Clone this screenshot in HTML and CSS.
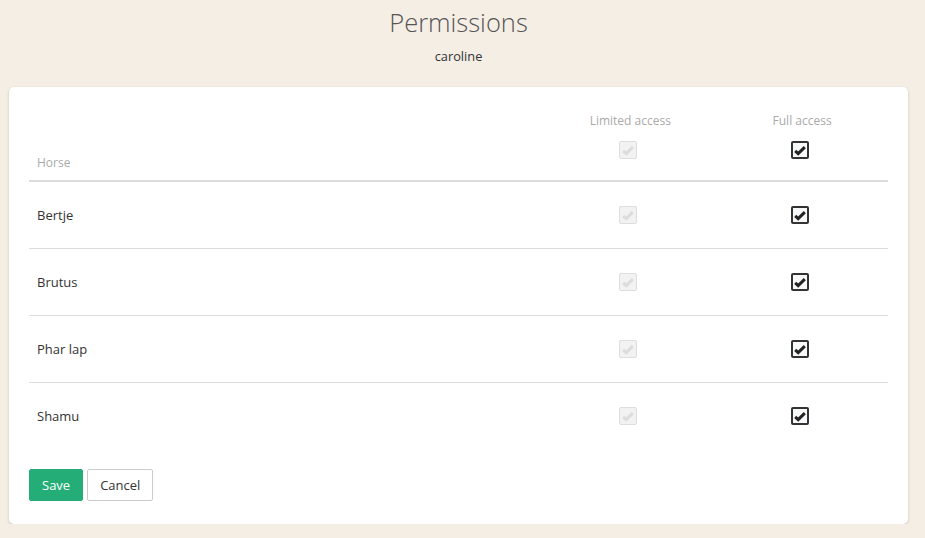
FILE: index.html
```html
<!DOCTYPE html>
<html lang="en">
<head>
    <meta charset="UTF-8">
    <meta name="viewport" content="width=device-width, initial-scale=1.0">
    <title>Permissions</title>
    <link rel="stylesheet" href="styles.css">
</head>
<body>

    <div class="head">
        <h1>Permissions</h1>
        <p class="user">caroline</p>
    </div>

    <div class="card">
        <table class="perms">
            <thead>
                <tr>
                    <th class="name">Horse</th>
                    <th class="col">Limited access<span class="box off"><svg viewBox="0 0 14 14"><polyline points="2.2,7.8 5.2,10.6 11.8,4.2"/></svg></span></th>
                    <th class="col">Full access<span class="box on"><svg viewBox="0 0 14 14"><polyline points="2.2,7.8 5.2,10.6 11.8,4.2"/></svg></span></th>
                </tr>
            </thead>
            <tbody>
                <tr>
                    <td>Bertje</td>
                    <td class="col"><span class="box off"><svg viewBox="0 0 14 14"><polyline points="2.2,7.8 5.2,10.6 11.8,4.2"/></svg></span></td>
                    <td class="col"><span class="box on"><svg viewBox="0 0 14 14"><polyline points="2.2,7.8 5.2,10.6 11.8,4.2"/></svg></span></td>
                </tr>
                <tr>
                    <td>Brutus</td>
                    <td class="col"><span class="box off"><svg viewBox="0 0 14 14"><polyline points="2.2,7.8 5.2,10.6 11.8,4.2"/></svg></span></td>
                    <td class="col"><span class="box on"><svg viewBox="0 0 14 14"><polyline points="2.2,7.8 5.2,10.6 11.8,4.2"/></svg></span></td>
                </tr>
                <tr>
                    <td>Phar lap</td>
                    <td class="col"><span class="box off"><svg viewBox="0 0 14 14"><polyline points="2.2,7.8 5.2,10.6 11.8,4.2"/></svg></span></td>
                    <td class="col"><span class="box on"><svg viewBox="0 0 14 14"><polyline points="2.2,7.8 5.2,10.6 11.8,4.2"/></svg></span></td>
                </tr>
                <tr>
                    <td>Shamu</td>
                    <td class="col"><span class="box off"><svg viewBox="0 0 14 14"><polyline points="2.2,7.8 5.2,10.6 11.8,4.2"/></svg></span></td>
                    <td class="col"><span class="box on"><svg viewBox="0 0 14 14"><polyline points="2.2,7.8 5.2,10.6 11.8,4.2"/></svg></span></td>
                </tr>
            </tbody>
        </table>

        <div class="actions">
            <button class="btn save">Save</button>
            <button class="btn cancel">Cancel</button>
        </div>
    </div>

</body>
</html>
```

FILE: styles.css
```css
* {
  margin: 0;
  padding: 0;
  box-sizing: border-box;
}

body {
  background-color: #f5eee5;
  font-family: "Open Sans", sans-serif;
  font-size: 13px;
  color: #333;
  padding: 0 17px 0 9px;
}

.head {
  text-align: center;
  padding-top: 5px;
}
.head h1 {
  font-weight: 300;
  font-size: 25.5px;
  line-height: 34px;
  color: #555;
}
.head .user {
  margin-top: 8px;
  font-size: 12.8px;
  line-height: 18px;
}

.card {
  margin-top: 22px;
  background-color: white;
  border-radius: 5px;
  box-shadow: 0 1px 3px rgba(0, 0, 0, 0.18);
  padding: 20px 20px 23px;
}

.perms {
  width: 100%;
  border-collapse: collapse;
}
.perms th {
  font-weight: normal;
  font-size: 12px;
  color: #aaa;
  line-height: 17px;
  vertical-align: bottom;
  padding: 5px 8px 9px;
  border-bottom: 2px solid #ddd;
}
.perms th.name {
  text-align: left;
  width: 60%;
}
.perms th.col {
  width: 20%;
}
.perms td {
  padding: 24px 8px;
  line-height: 18px;
  border-bottom: 1px solid #ddd;
}
.perms tr:last-child td {
  border-bottom: none;
}
.col {
  text-align: center;
}

.box {
  display: block;
  margin: 0 auto;
  width: 18px;
  height: 18px;
  border-radius: 2px;
  line-height: 0;
  position: relative;
  left: -2px;
}
th .box {
  margin-top: 12px;
  margin-bottom: 12px;
}
.box svg {
  width: 14px;
  height: 14px;
  fill: none;
  stroke-width: 3;
}
.box.on {
  border: 2px solid #333;
  background-color: #f7f8fa;
}
.box.on svg {
  stroke: #222;
}
.box.off {
  border: 1px solid #dedede;
  background-color: #f2f2f2;
}
.box.off svg {
  margin: 1px;
  stroke: #dcdcdc;
}

.actions {
  display: flex;
  gap: 4px;
  margin-top: 20px;
}
.btn {
  font-family: "Open Sans", sans-serif;
  font-size: 13px;
  height: 32px;
  padding: 0 12px;
  border-radius: 2px;
  cursor: pointer;
}
.save {
  background-color: #25ad78;
  border: 1px solid #25ad78;
  color: white;
}
.cancel {
  background-color: white;
  border: 1px solid #ccc;
  color: #333;
}
```
